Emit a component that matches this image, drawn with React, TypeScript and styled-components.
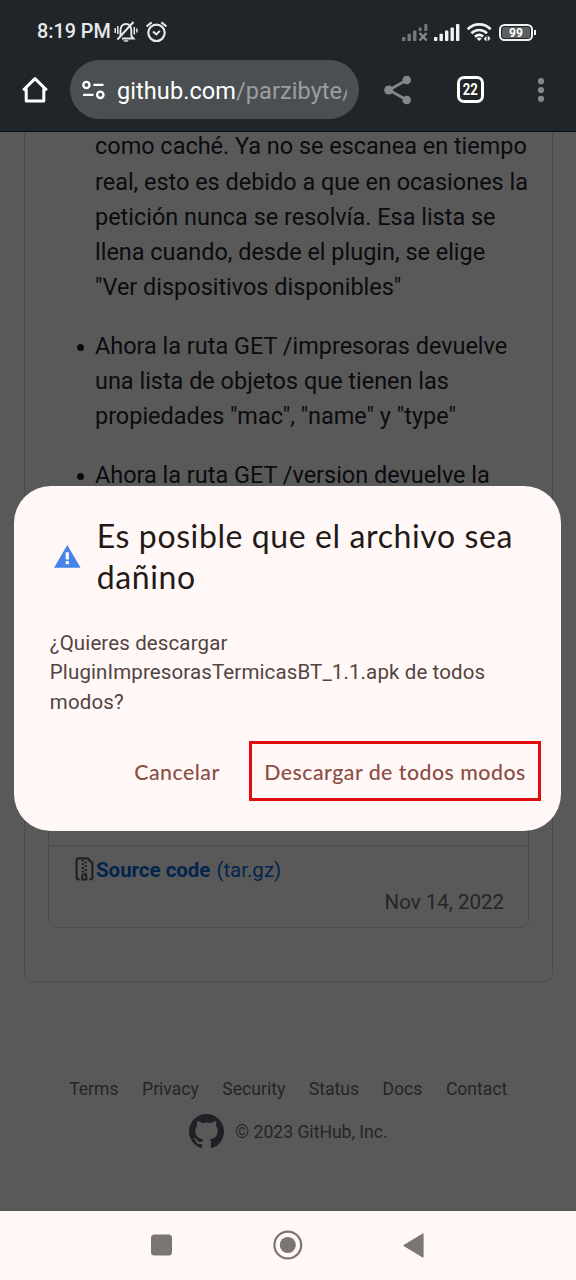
import React from "react";
import styled, { createGlobalStyle } from "styled-components";

const GlobalStyle = createGlobalStyle`
  * { box-sizing: border-box; }
  html, body { margin: 0; padding: 0; }
  body { font-family: Roboto, "Liberation Sans", sans-serif; background: #202529; }
  svg { display: block; flex: none; }
`;

const Screen = styled.div`
  width: 576px;
  height: 1280px;
  display: flex;
  flex-direction: column;
  overflow: hidden;
`;

const StatusBar = styled.div`
  height: 60px;
  flex: none;
  padding: 4px 43px 0 37px;
  display: flex;
  align-items: center;
  justify-content: space-between;
  background: #202529;
  color: #e6e8e9;
`;

const Clock = styled.span`
  font-size: 19.8px;
  font-weight: 500;
  line-height: 24px;
  width: 77px;
  white-space: nowrap;
`;

const StatusGroup = styled.div`
  display: flex;
  align-items: center;
  gap: 0;
`;

const StatusIcons = styled(StatusGroup)`
  gap: 6.5px;
`;

const AlarmSlot = styled.span`
  margin-left: 7px;
`;

const BrowserBar = styled.header`
  height: 72px;
  flex: none;
  display: flex;
  align-items: flex-start;
  padding-left: 21px;
  background: #202529;
  border-bottom: 1px solid #0b0e10;
`;

const IconButton = styled.button<{ $width: number }>`
  width: ${(p) => p.$width}px;
  height: 59px;
  flex: none;
  padding: 0;
  border: 0;
  background: none;
  display: flex;
  align-items: center;
  justify-content: center;
`;

const UrlPill = styled.div`
  width: 288.5px;
  height: 59px;
  margin-left: 21px;
  padding: 0 12px 0 12px;
  display: flex;
  align-items: center;
  gap: 12px;
  border-radius: 30px;
  background: #4b4f52;
`;

const Url = styled.div`
  flex: 1;
  height: 36px;
  overflow: hidden;
  white-space: nowrap;
  font-size: 23.5px;
  line-height: 38px;
  letter-spacing: 0.08px;
  color: #fff;
`;

const UrlPath = styled.span`
  color: #9b9ea0;
`;

const TabCount = styled.span`
  width: 27px;
  height: 27px;
  border: 3px solid #fff;
  border-radius: 7px;
  color: #fff;
  display: flex;
  align-items: center;
  justify-content: center;
  font-family: Roboto, sans-serif;
  font-size: 16px;
  font-weight: 700;
  line-height: 21px;
`;

const Condensed = styled.span`
  display: block;
  transform: scaleX(0.82);
`;

const Viewport = styled.main`
  position: relative;
  height: 1079px;
  flex: none;
  background: #fff;
  overflow: hidden;
`;

const ReleaseCard = styled.section`
  height: 850px;
  margin: 0 23px 0 23.5px;
  padding: 0 23.5px 53px;
  display: flex;
  flex-direction: column;
  justify-content: space-between;
  border: 1px solid #d0d7de;
  border-top: 0;
  border-radius: 0 0 9px 9px;
`;

const Notes = styled.ul`
  list-style: none;
  margin: -2.6px -12px 0 0;
  padding: 0 0 0 47px;
  display: flex;
  flex-direction: column;
  gap: 23.6px;
`;

const Note = styled.li<{ $bullet?: boolean }>`
  position: relative;
  font-size: 23.44px;
  line-height: 35.16px;
  color: #1f2328;
  white-space: nowrap;

  &::before {
    content: "";
    display: ${(p) => (p.$bullet ? "block" : "none")};
    position: absolute;
    left: -18px;
    top: 15px;
    width: 7px;
    height: 7px;
    border-radius: 50%;
    background: #1f2328;
  }
`;

const Assets = styled.div`
  height: 164px;
  display: flex;
  flex-direction: column;
  justify-content: flex-end;
  border: 1px solid #d0d7de;
  border-radius: 9px;
`;

const Asset = styled.div`
  height: 82px;
  padding: 8px 23.5px 0 25.5px;
  display: flex;
  flex-direction: column;
  border-top: 1px solid #d0d7de;
`;

const AssetName = styled.div`
  display: flex;
  align-items: center;
  height: 31px;
  font-size: 20.5px;
  color: #0969da;
  svg { margin: -2px 1.5px 0 0; }
  b { font-weight: 700; margin-right: 6px; letter-spacing: -0.03px; }
`;

const AssetDate = styled.time`
  align-self: flex-end;
  font-size: 20.5px;
  line-height: 35px;
  color: #656d76;
`;

const Footer = styled.footer`
  margin-top: 93.5px;
  display: flex;
  flex-direction: column;
  align-items: center;
  font-size: 17.58px;
  color: #656d76;
`;

const FooterLinks = styled.nav`
  display: flex;
  gap: 23.5px;
  line-height: 26px;
  padding-left: 0.5px;
`;

const Copyright = styled.div`
  margin-top: 12.5px;
  padding-left: 0.5px;
  display: flex;
  align-items: center;
  gap: 11.5px;
  line-height: 36px;
  svg { margin-top: -2px; }
`;

const Scrim = styled.div`
  position: absolute;
  inset: 0;
  background: rgba(0, 0, 0, 0.65);
`;

const Dialog = styled.div`
  position: absolute;
  left: 14.3px;
  top: 354px;
  width: 547.2px;
  height: 345.3px;
  padding: 30px 20.5px 0 35.5px;
  border-radius: 37px;
  background: #fff8f6;
`;

const DialogHead = styled.div`
  display: flex;
  align-items: center;
  padding-left: 4.5px;
  gap: 15.5px;
`;

const Title = styled.h1`
  margin: 0;
  font-family: Lato, sans-serif;
  font-size: 32px;
  font-weight: 400;
  line-height: 40.6px;
  letter-spacing: 0.6px;
  color: #231a18;
  white-space: nowrap;
`;

const Message = styled.p`
  margin: 31.8px 0 24.2px;
  font-size: 20.5px;
  line-height: 29.3px;
  color: #534341;
  letter-spacing: 0.12px;
  white-space: nowrap;
`;

const Actions = styled.div`
  display: flex;
  justify-content: flex-end;
  gap: 14px;
`;

const Action = styled.button<{ $outlined?: boolean; $width: number }>`
  width: ${(p) => p.$width}px;
  height: 60px;
  padding: 2px 0 0;
  border: 3px solid ${(p) => (p.$outlined ? "#e10c0d" : "transparent")};
  background: none;
  color: #8c4e45;
  font-family: Lato, sans-serif;
  font-size: 21.3px;
  font-weight: 500;
  letter-spacing: 0.5px;
  white-space: nowrap;
`;

const SystemNav = styled.nav`
  height: 69px;
  flex: none;
  display: grid;
  grid-template-columns: repeat(3, 126px);
  justify-content: center;
  align-items: center;
  justify-items: center;
  padding-bottom: 1px;
  background: #fff8f6;
`;

const MutedBell = () => (
  <svg width="24" height="22" viewBox="0 0 24 22" fill="none" stroke="#e6e8e9" strokeWidth="1.9">
    <path d="M6.5 15V9.2C6.5 5.4 8.7 3 12 3c3.1 0 5.3 2.4 5.3 6.2V15l2.2 2.5H8" />
    <path d="M3.4 18.6 19.4 1" strokeWidth="2.1" />
    <path d="M1.2 7v5M3.8 5v8M20.3 6v7.5M22.9 7.5v4" strokeWidth="1.5" />
    <path d="M9.3 19.2h5.4a2.8 2.2 0 0 1-5.4 0z" fill="#e6e8e9" stroke="none" />
  </svg>
);

const AlarmClock = () => (
  <svg width="23" height="22" viewBox="0 0 23 22" fill="none" stroke="#e6e8e9" strokeWidth="2">
    <circle cx="11.5" cy="11.8" r="8.2" strokeWidth="2.2" />
    <path d="M1.6 5.5 6.6 1.3M16.4 1.3l5 4.2" strokeWidth="2.2" />
    <path d="m8 10.4 3.3 3 3.6-3.5" />
  </svg>
);

const SignalBars = ({ none = false }: { none?: boolean }) => (
  <svg width="26" height="17" viewBox="0 0 26 17" fill={none ? "#75797b" : "#f1f2f2"}>
    <rect x="0" y="13" width="3.4" height="4" rx="0.8" />
    <rect x="5.5" y="9.8" width="3.4" height="7.2" rx="0.8" />
    <rect x="11" y="6.6" width="3.4" height="10.4" rx="0.8" />
    {none ? (
      <>
        <path d="M16.8 3.6h2.8v3.4h-2.8zM22.3 0h3v7h-3z" />
        <path d="m17.6 9 7 7.6M24.6 9l-7 7.6" stroke="#85898b" strokeWidth="2.3" />
      </>
    ) : (
      <>
        <rect x="16.5" y="3.4" width="3.4" height="13.6" rx="0.8" />
        <rect x="22" y="0" width="3.4" height="17" rx="0.8" />
      </>
    )}
  </svg>
);

const Wifi = () => (
  <svg width="26" height="19" viewBox="0 0 26 19" fill="none" stroke="#f1f2f2" strokeWidth="2.7">
    <path d="M0.7 6.3C7.3-.2 17.1-.2 23.7 6.3" />
    <path d="M4.4 10.2c4.6-4.3 11-4.3 15.6 0" />
    <path d="M7.9 13.8c2.6-2.3 5.8-2.3 8.2-.2" />
    <path d="m12.2 18-2.6-2.6c1.5-1.2 3.7-1.2 5.2 0z" fill="#f1f2f2" stroke="none" />
    <path d="M19.5 13v5.6l-2.8-2.8zM20.7 12.6v5.6l2.9-2.8z" fill="#f1f2f2" stroke="none" />
  </svg>
);

const Battery = styled.div`
  position: relative;
  width: 34px;
  height: 17px;
  border: 2px solid #f1f2f2;
  border-radius: 5.5px;
  padding: 1px;

  &::after {
    content: "";
    position: absolute;
    right: -5px;
    top: 4px;
    width: 2px;
    height: 5px;
    background: #f1f2f2;
  }
`;

const BatteryLevel = styled.div`
  height: 11px;
  width: 28px;
  border-radius: 2.5px;
  background: #5c6063;
  color: #fff;
  font-size: 12px;
  font-weight: 700;
  line-height: 12px;
  text-align: center;
`;

const HomeIcon = () => (
  <svg width="28" height="28" viewBox="0 0 28 28" fill="none" stroke="#fff" strokeWidth="3">
    <path d="M2.2 14.2 14 2.6l11.8 11.6M5.2 12.5v12.4h17.6V12.5" strokeLinejoin="round" />
  </svg>
);

const TuneIcon = () => (
  <svg width="23" height="20" viewBox="0 0 23 20" fill="none" stroke="#fff" strokeWidth="2.3">
    <circle cx="4.4" cy="4.9" r="3.1" />
    <path d="M11.5 4.9h10M1 14.8h10.5" />
    <circle cx="18.3" cy="14.8" r="3.2" />
  </svg>
);

const ShareIcon = () => (
  <svg width="28" height="30" viewBox="0 0 28 30" fill="#84878a" stroke="#84878a">
    <path d="M22.7 5 5 15l17.7 10" fill="none" strokeWidth="2.7" />
    <circle cx="22.7" cy="5" r="4.3" stroke="none" />
    <circle cx="4.7" cy="15" r="4.5" stroke="none" />
    <circle cx="22.7" cy="25" r="4.3" stroke="none" />
  </svg>
);

const MoreIcon = () => (
  <svg width="8" height="26" viewBox="0 0 8 26" fill="#84878a">
    <circle cx="4" cy="4.2" r="3.1" />
    <circle cx="4" cy="13" r="3.1" />
    <circle cx="4" cy="21.8" r="3.1" />
  </svg>
);

const ZipFileIcon = () => (
  <svg width="20" height="24" viewBox="0 0 20 24" fill="none" stroke="#57606a" strokeWidth="2.2">
    <path d="M3.6 22.4C2.2 22.4 1.6 21.6 1.6 20.6V3.2c0-1.2.6-1.8 1.8-1.8h9.2l4.8 4.8v14.4c0 1.1-.6 1.8-2 1.8" strokeLinecap="round" />
    <path d="M7.8 2.4v13M10.8 4.4v12" strokeWidth="2.4" strokeDasharray="1.9 1.9" />
    <path d="M7.2 22.6v-3.4c0-1.2.8-2 2.1-2s2.1.8 2.1 2v3.4z" strokeWidth="2" />
  </svg>
);

const WarningIcon = () => (
  <svg width="27" height="23" viewBox="0 0 27 23">
    <path d="M13.3 0 26.6 22.7H0z" fill="#4583ea" />
    <path d="M11.7 7.2h3.2v7.2h-3.2zM11.7 16h3.2v3.2h-3.2z" fill="#fff8f6" />
  </svg>
);

const GitHubMark = () => (
  <svg width="35" height="35" viewBox="0 0 16 16" fill="#57606a">
    <path d="M8 0C3.58 0 0 3.58 0 8c0 3.54 2.29 6.53 5.47 7.59.4.07.55-.17.55-.38 0-.19-.01-.82-.01-1.49-2.01.37-2.53-.49-2.69-.94-.09-.23-.48-.94-.82-1.13-.28-.15-.68-.52-.01-.53.63-.01 1.08.58 1.23.82.72 1.21 1.87.87 2.33.66.07-.52.28-.87.51-1.07-1.78-.2-3.64-.89-3.64-3.95 0-.87.31-1.59.82-2.15-.08-.2-.36-1.02.08-2.12 0 0 .67-.21 2.2.82.64-.18 1.32-.27 2-.27.68 0 1.36.09 2 .27 1.53-1.04 2.2-.82 2.2-.82.44 1.1.16 1.92.08 2.12.51.56.82 1.27.82 2.15 0 3.07-1.87 3.75-3.65 3.95.29.25.54.73.54 1.48 0 1.07-.01 1.93-.01 2.2 0 .21.15.46.55.38A8.013 8.013 0 0 0 16 8c0-4.42-3.58-8-8-8z" />
  </svg>
);

const footerLinks = ["Terms", "Privacy", "Security", "Status", "Docs", "Contact"];

export default function App() {
  return (
    <Screen>
      <GlobalStyle />
      <StatusBar>
        <StatusGroup>
          <Clock>8:19 PM</Clock>
          <MutedBell />
          <AlarmSlot><AlarmClock /></AlarmSlot>
        </StatusGroup>
        <StatusIcons>
          <SignalBars none />
          <SignalBars />
          <Wifi />
          <Battery>
            <BatteryLevel>99</BatteryLevel>
          </Battery>
        </StatusIcons>
      </StatusBar>

      <BrowserBar>
        <IconButton $width={28}><HomeIcon /></IconButton>
        <UrlPill>
          <TuneIcon />
          <Url>github.com<UrlPath>/parzibyte/</UrlPath></Url>
        </UrlPill>
        <IconButton $width={78.5}><ShareIcon /></IconButton>
        <IconButton $width={67}><TabCount><Condensed>22</Condensed></TabCount></IconButton>
        <IconButton $width={74}><MoreIcon /></IconButton>
      </BrowserBar>

      <Viewport>
        <ReleaseCard>
          <Notes>
            <Note>
              como caché. Ya no se escanea en tiempo<br />
              real, esto es debido a que en ocasiones la<br />
              petición nunca se resolvía. Esa lista se<br />
              llena cuando, desde el plugin, se elige<br />
              "Ver dispositivos disponibles"
            </Note>
            <Note $bullet>
              Ahora la ruta GET /impresoras devuelve<br />
              una lista de objetos que tienen las<br />
              propiedades "mac", "name" y "type"
            </Note>
            <Note $bullet>Ahora la ruta GET /version devuelve la</Note>
          </Notes>
          <Assets>
            <Asset>
              <AssetName>
                <ZipFileIcon />
                <b>Source code</b>
                <span>(tar.gz)</span>
              </AssetName>
              <AssetDate>Nov 14, 2022</AssetDate>
            </Asset>
          </Assets>
        </ReleaseCard>
        <Footer>
          <FooterLinks>
            {footerLinks.map((label) => <span key={label}>{label}</span>)}
          </FooterLinks>
          <Copyright>
            <GitHubMark />
            <span>© 2023 GitHub, Inc.</span>
          </Copyright>
        </Footer>

        <Scrim />
        <Dialog role="alertdialog">
          <DialogHead>
            <WarningIcon />
            <Title>Es posible que el archivo sea<br />dañino</Title>
          </DialogHead>
          <Message>
            ¿Quieres descargar<br />
            PluginImpresorasTermicasBT_1.1.apk de todos<br />
            modos?
          </Message>
          <Actions>
            <Action $width={116}>Cancelar</Action>
            <Action $outlined $width={292}>Descargar de todos modos</Action>
          </Actions>
        </Dialog>
      </Viewport>

      <SystemNav>
        <svg width="22" height="22" viewBox="0 0 22 22"><rect x="0" y="0.5" width="21" height="21" rx="3.5" fill="#7b7673" /></svg>
        <svg width="30" height="30" viewBox="0 0 30 30">
          <circle cx="14.8" cy="15" r="13.4" fill="none" stroke="#7b7673" strokeWidth="2.2" />
          <circle cx="14.8" cy="15" r="8" fill="#7b7673" />
        </svg>
        <svg width="22" height="25" viewBox="0 0 22 25"><path d="M1 12.5 20 1v23z" fill="#7b7673" stroke="#7b7673" strokeWidth="1.2" strokeLinejoin="round" /></svg>
      </SystemNav>
    </Screen>
  );
}
